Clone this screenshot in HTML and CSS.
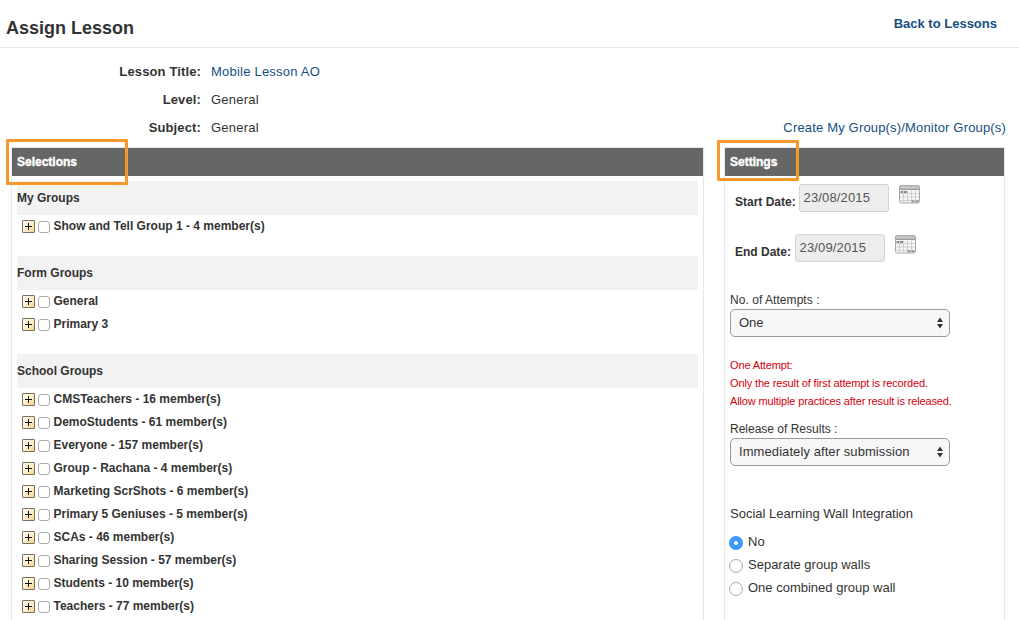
FILE: index.html
```html
<!DOCTYPE html>
<html lang="en">
<head>
<meta charset="utf-8">
<title>Assign Lesson</title>
<link rel="stylesheet" href="styles.css">
</head>
<body>
<svg class="defs" width="0" height="0" aria-hidden="true">
  <defs>
    <linearGradient id="cream" x1="0" y1="0" x2="1" y2="1"><stop offset="0" stop-color="#fffdf5"/><stop offset=".5" stop-color="#fdf0cf"/><stop offset="1" stop-color="#f8d083"/></linearGradient>
    <linearGradient id="steel" x1="0" y1="0" x2="0" y2="1"><stop offset="0" stop-color="#b4b4b4"/><stop offset="1" stop-color="#9c9c9c"/></linearGradient>
    <symbol id="plus" viewBox="0 0 13 13">
      <rect x=".5" y=".5" width="12" height="12" rx=".5" fill="url(#cream)" stroke="#77705f"/>
      <path d="M3 6.5h7M6.5 3v7" stroke="#111" fill="none"/>
    </symbol>
    <symbol id="calendar" viewBox="0 0 21 19">
      <rect x=".5" y=".5" width="20" height="17.5" rx="1.5" fill="#f6f6f6" stroke="#a8a8a8"/>
      <path d="M.5 5V2Q.5.5 2 .5h17q1.500 0 1.500 1.500v3z" fill="url(#steel)"/>
      <path d="M1.500 2.500h18" stroke="#cdcdcd" stroke-width="2"/>
      <path d="M1 8.500h19M1 12h19M1 15.500h19M4.500 5.500V18M8.500 5.500V18M12.500 5.500V18M16.500 5.500V18" stroke="#d0d0d0" fill="none"/>
      <path d="M1.500 7h2.500M5 7h3M12.500 16.300h3M16.500 16.300h3" stroke="#8c8c8c" stroke-width="1.800"/>
    </symbol>
    <symbol id="updown" viewBox="0 0 6 12"><path d="M3 .500l3 4.500H0zM3 11.500L0 7h6z" fill="#333"/></symbol>
  </defs>
</svg>
<header class="top">
  <h1 class="title">Assign Lesson</h1>
  <a class="back">Back to Lessons</a>
</header>
<section class="summary">
  <dl class="meta">
    <dt class="meta-name">Lesson Title:</dt><dd class="meta-value link">Mobile Lesson AO</dd>
    <dt class="meta-name">Level:</dt><dd class="meta-value">General</dd>
    <dt class="meta-name">Subject:</dt><dd class="meta-value">General</dd>
  </dl>
  <a class="link create">Create My Group(s)/Monitor Group(s)</a>
</section>
<main class="columns">
  <section class="panel selections">
    <h2 class="bar">Selections</h2>
    <div class="mark"></div>
    <div class="groups">
      <h3 class="group-title">My Groups</h3>
      <ul class="list">
        <li class="row"><svg class="plus"><use href="#plus"/></svg><span class="check"></span><span class="name">Show and Tell Group 1 - 4 member(s)</span></li>
      </ul>
      <h3 class="group-title">Form Groups</h3>
      <ul class="list">
        <li class="row"><svg class="plus"><use href="#plus"/></svg><span class="check"></span><span class="name">General</span></li>
        <li class="row"><svg class="plus"><use href="#plus"/></svg><span class="check"></span><span class="name">Primary 3</span></li>
      </ul>
      <h3 class="group-title">School Groups</h3>
      <ul class="list">
        <li class="row"><svg class="plus"><use href="#plus"/></svg><span class="check"></span><span class="name">CMSTeachers - 16 member(s)</span></li>
        <li class="row"><svg class="plus"><use href="#plus"/></svg><span class="check"></span><span class="name">DemoStudents - 61 member(s)</span></li>
        <li class="row"><svg class="plus"><use href="#plus"/></svg><span class="check"></span><span class="name">Everyone - 157 member(s)</span></li>
        <li class="row"><svg class="plus"><use href="#plus"/></svg><span class="check"></span><span class="name">Group - Rachana - 4 member(s)</span></li>
        <li class="row"><svg class="plus"><use href="#plus"/></svg><span class="check"></span><span class="name">Marketing ScrShots - 6 member(s)</span></li>
        <li class="row"><svg class="plus"><use href="#plus"/></svg><span class="check"></span><span class="name">Primary 5 Geniuses - 5 member(s)</span></li>
        <li class="row"><svg class="plus"><use href="#plus"/></svg><span class="check"></span><span class="name">SCAs - 46 member(s)</span></li>
        <li class="row"><svg class="plus"><use href="#plus"/></svg><span class="check"></span><span class="name">Sharing Session - 57 member(s)</span></li>
        <li class="row"><svg class="plus"><use href="#plus"/></svg><span class="check"></span><span class="name">Students - 10 member(s)</span></li>
        <li class="row"><svg class="plus"><use href="#plus"/></svg><span class="check"></span><span class="name">Teachers - 77 member(s)</span></li>
      </ul>
    </div>
  </section>
  <section class="panel settings">
    <h2 class="bar">Settings</h2>
    <div class="mark"></div>
    <div class="form">
      <div class="date"><span class="date-name start">Start Date:</span><span class="date-box">23/08/2015</span><svg class="calendar"><use href="#calendar"/></svg></div>
      <div class="date"><span class="date-name end">End Date:</span><span class="date-box">23/09/2015</span><svg class="calendar"><use href="#calendar"/></svg></div>
      <div class="label attempts">No. of Attempts :</div>
      <div class="select"><span>One</span><svg class="updown"><use href="#updown"/></svg></div>
      <div class="note"><div>One Attempt:</div><div>Only the result of first attempt is recorded.</div><div>Allow multiple practices after result is released.</div></div>
      <div class="label release">Release of Results :</div>
      <div class="select"><span class="long">Immediately after submission</span><svg class="updown"><use href="#updown"/></svg></div>
      <div class="wall">Social Learning Wall Integration</div>
      <div class="option"><span class="radio on"></span><span>No</span></div>
      <div class="option"><span class="radio"></span><span>Separate group walls</span></div>
      <div class="option"><span class="radio"></span><span>One combined group wall</span></div>
    </div>
  </section>
</main>
</body>
</html>
```
FILE: styles.css
```css
* { box-sizing: border-box; }
body { margin: 0; height: 620px; overflow: hidden; display: flex; flex-direction: column; background: #fff; color: #333; font: 13px/18px "Liberation Sans", Arial, sans-serif; white-space: nowrap; }
h1, h2, h3, ul, dl, dd { margin: 0; padding: 0; list-style: none; }
.defs { position: absolute; }
.link, .back { color: #154f82; }
.top { flex: none; height: 48px; border-bottom: 1px solid #e9e9e9; display: flex; justify-content: space-between; padding: 0 22px 0 6px; }
.title { font-size: 18px; line-height: 22px; padding-top: 17px; }
.back { font-weight: bold; padding-top: 15px; }
.summary { flex: none; height: 99px; padding: 10px 13px 0 0; display: flex; justify-content: space-between; align-items: flex-end; }
.meta { display: grid; grid-template-columns: 201px auto; grid-auto-rows: 28px; column-gap: 10px; line-height: 28px; height: 89px; }
.meta-name { text-align: right; font-weight: bold; letter-spacing: .13px; }
.meta-value { letter-spacing: .22px; }
.create { line-height: 28px; padding-bottom: 5px; letter-spacing: .17px; }
.columns { flex: 1; min-height: 0; display: flex; gap: 20px; padding-left: 11px; }
.panel { position: relative; border: 1px solid #e7e8ec; border-bottom: 0; }
.selections { width: 693px; }
.settings { width: 281px; }
.bar { height: 28px; padding-left: 5px; background: #666; color: #fff; font-size: 12px; line-height: 28px; -webkit-text-stroke: .4px #fff; }
.mark { position: absolute; border: 3px solid #f7982d; border-radius: 1px; }
.selections .mark { left: -6px; top: -9px; width: 122px; height: 46px; }
.settings .mark { left: -8px; top: -8px; width: 82px; height: 41px; }
.groups { padding: 5px 5px 0; }
.group-title { height: 34px; line-height: 34px; background: #f2f2f2; font-size: 12px; }
.list { padding: 0 0 18px 5px; }
.row { height: 23px; display: flex; align-items: flex-start; font-size: 12px; font-weight: bold; line-height: 22px; }
.plus { width: 13px; height: 13px; margin: 5px 3px 0 0; flex: none; }
.check { width: 12px; height: 12px; margin: 6px 3.5px 0 0; border: 1px solid #aaa; border-radius: 3px; flex: none; background: #fff; }
.form { padding: 8px 5px 0; }
.date { height: 50px; display: flex; align-items: flex-start; padding-left: 5px; }
.date-name { font-size: 12px; font-weight: bold; line-height: 36px; }
.start { width: 64px; }
.end { width: 60px; }
.date-box { width: 90px; height: 28px; border: 1px solid #d3d3d3; border-radius: 3px; background: #ededed; color: #555; padding-left: 3.5px; line-height: 26px; letter-spacing: .15px; }
.calendar { width: 21px; height: 19px; margin: 1px 0 0 10px; }
.label { font-size: 12px; line-height: 18px; }
.attempts { margin-top: 7px; letter-spacing: .05px; }
.select { width: 220px; height: 28px; border: 1px solid #999; border-radius: 5px; background: #f7f7f7; display: flex; align-items: center; justify-content: space-between; padding: 0 6px 0 8px; line-height: 26px; }
.long { letter-spacing: .08px; }
.updown { width: 6px; height: 12px; }
.note { margin-top: 19px; color: #d3000d; font-size: 11px; line-height: 18px; letter-spacing: -.14px; }
.release { margin-top: 10px; }
.wall { margin-top: 39px; }
.wall + .option { margin-top: 7px; }
.option { display: flex; height: 23px; line-height: 23px; }
.radio { width: 14px; height: 14px; border: 1px solid #aaa; border-radius: 50%; margin: 6px 5px 0 -1px; background: #fff; }
.on { border: 5px solid #3b99fc; }
```
